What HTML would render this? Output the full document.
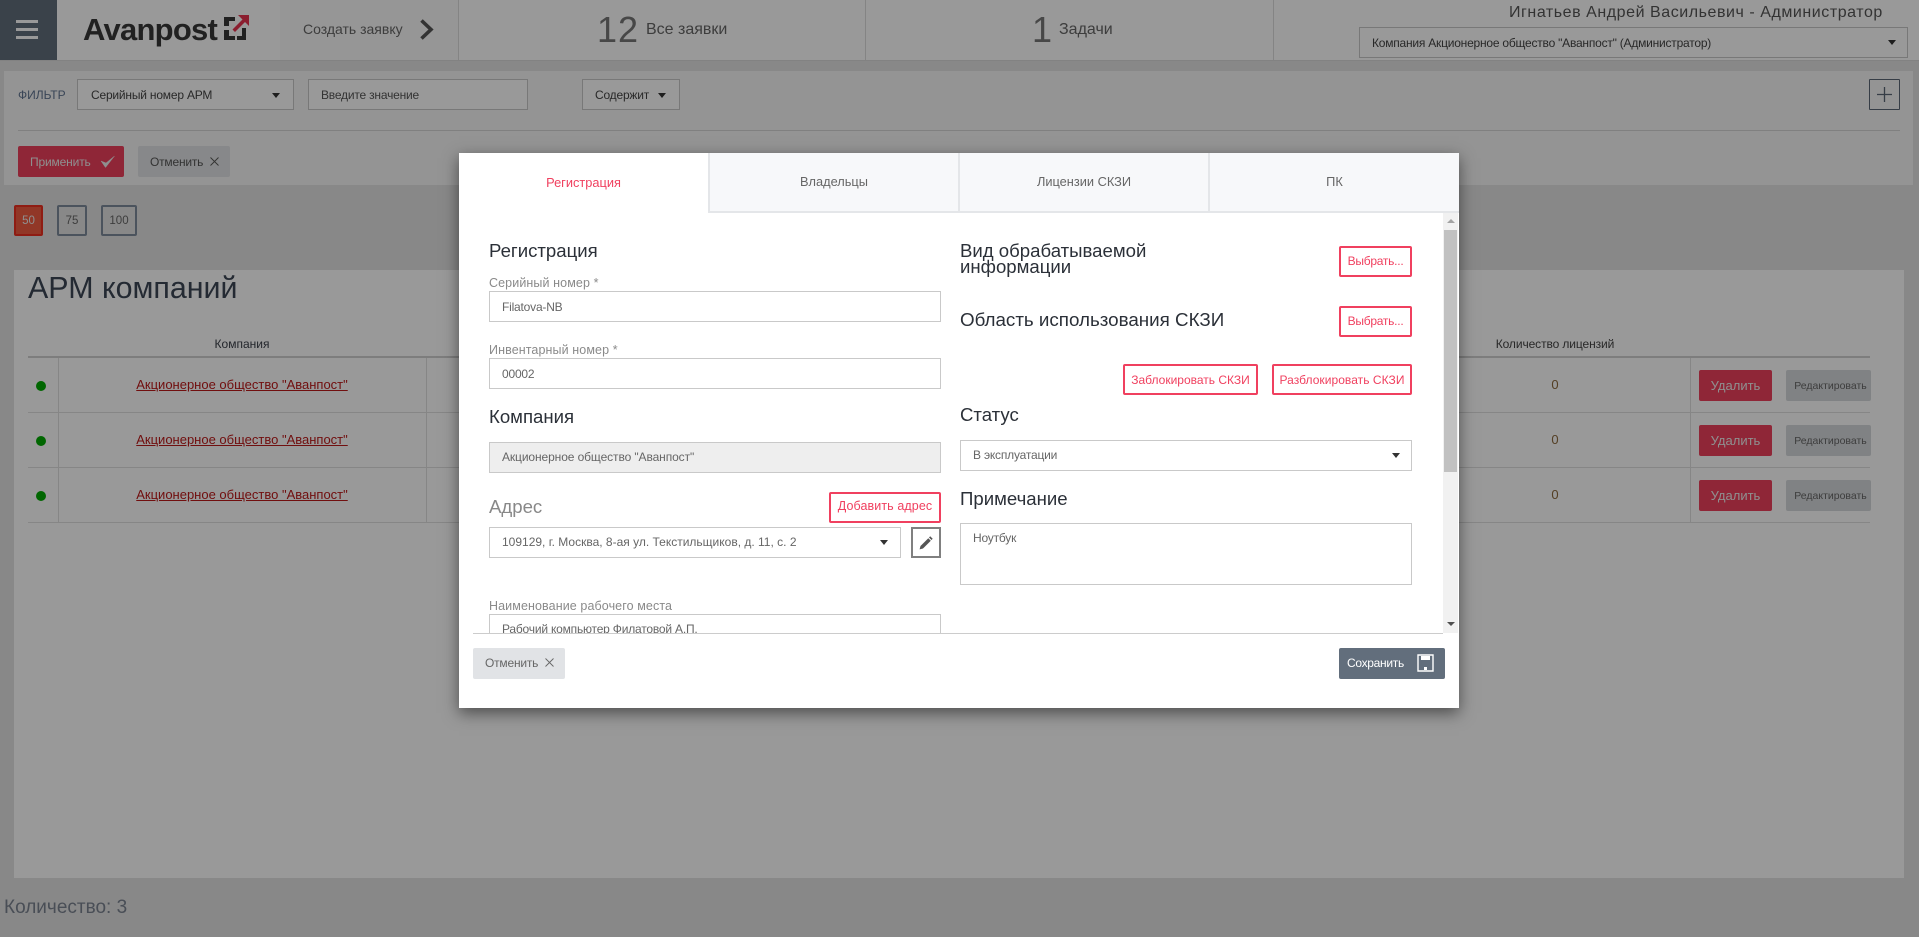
<!DOCTYPE html>
<html lang="ru"><head><meta charset="utf-8"><title>АРМ компаний</title>
<style>
*{box-sizing:border-box}
html,body{margin:0;padding:0;width:1919px;height:937px;overflow:hidden;background:#e3e3e3;font-family:"Liberation Sans","Noto Sans CJK SC",sans-serif;color:#555}
.a{position:absolute;white-space:nowrap}
.c{display:flex;align-items:center;justify-content:center}
.l{display:flex;align-items:center}
.fld{background:#fff;border:1px solid #c9c9c9;font-size:12px;letter-spacing:-.2px;color:#666;display:flex;align-items:center;padding-left:12px}
.tri{position:absolute;width:0;height:0;border-left:4.5px solid transparent;border-right:4.5px solid transparent;border-top:5px solid #333}
.h{font-size:18.6px;color:#2b3038;line-height:20px;height:20px}
.lab{font-size:12.5px;color:#8a8a8a;letter-spacing:.1px;line-height:16px;height:16px}
.rb{border:2px solid #f0405f;border-radius:2px;color:#f0405f;font-size:12px;letter-spacing:-.25px;background:#fff}
.del{background:#ee405c;border-radius:2px;color:#eee;font-size:13px}
.edt{background:#d6d9dd;border-radius:2px;color:#666;font-size:10.5px;padding-left:4px}
.tab{top:153px;height:60px;background:#f7f8fa;border-left:2px solid #e4e6e9;border-bottom:2px solid #e4e6e9;font-size:12.8px;color:#666;padding-bottom:2px}
.lnk{color:#bc1a1a;font-size:13px;text-decoration:underline}
.hl{height:1px;background:#e0e0e0}
</style></head><body>

<!-- header -->
<div class="a" style="left:0;top:0;width:1919px;height:61px;background:#fff;border-bottom:1px solid #d9d9d9"></div>
<div class="a" style="left:0;top:0;width:57px;height:60px;background:#626e7c"></div>
<div class="a" style="left:16px;top:20px;width:22px;height:3px;background:#fff"></div>
<div class="a" style="left:16px;top:28px;width:22px;height:3px;background:#fff"></div>
<div class="a" style="left:16px;top:36px;width:22px;height:3px;background:#fff"></div>
<div class="a l" style="left:83px;top:12px;height:36px;font-size:31px;font-weight:bold;letter-spacing:-.75px;color:#383838">Avanpost</div>
<svg class="a" style="left:224px;top:14px" width="26" height="27" viewBox="0 0 26 27">
<path d="M0 3H11V7H5V12H0zM0 16H5V22H11V26H0zM22 14V26H13V22H18V14z" fill="#383838"/>
<path d="M14 1H25V12zM21.500 2.500 24 5 11 18 8.500 15.500z" fill="#e8324f"/>
</svg>
<div class="a" style="left:280px;top:0;width:179px;height:60px;background:#fafafa"></div>
<div class="a" style="left:458px;top:0;width:1px;height:60px;background:#dcdcdc"></div>
<div class="a" style="left:865px;top:0;width:1px;height:60px;background:#dcdcdc"></div>
<div class="a" style="left:1273px;top:0;width:1px;height:60px;background:#dcdcdc"></div>
<div class="a l" style="left:303px;top:20px;height:18px;font-size:14px;color:#666">Создать заявку</div>
<svg class="a" style="left:418px;top:18px" width="17" height="23" viewBox="0 0 17 23"><path d="M3.500 2.500 13 11.500 3.500 20.500" fill="none" stroke="#555" stroke-width="3.600"/></svg>
<div class="a l" style="left:597px;top:10px;height:40px;font-size:36px;color:#777;letter-spacing:1px">12</div>
<div class="a l" style="left:646px;top:20px;height:20px;font-size:16px;color:#666">Все заявки</div>
<div class="a l" style="left:1032px;top:10px;height:40px;font-size:36px;color:#777">1</div>
<div class="a l" style="left:1059px;top:20px;height:20px;font-size:16px;color:#666">Задачи</div>
<div class="a l" style="left:1509px;top:3px;height:20px;font-size:16px;color:#555;letter-spacing:.55px">Игнатьев Андрей Васильевич - Администратор</div>
<div class="a fld" style="left:1359px;top:27px;width:549px;height:31px;color:#444;font-size:12px;letter-spacing:-.22px">Компания Акционерное общество "Аванпост" (Администратор)</div>
<div class="tri" style="left:1888px;top:40px"></div>

<!-- filter -->
<div class="a" style="left:4px;top:71px;width:1909px;height:114px;background:#f7f7f7"></div>
<div class="a l" style="left:18px;top:87px;height:16px;font-size:12px;color:#5f7390">ФИЛЬТР</div>
<div class="a fld" style="left:77px;top:79px;width:217px;height:31px;color:#444;padding-left:13px">Серийный номер АРМ</div>
<div class="tri" style="left:272px;top:93px"></div>
<div class="a fld" style="left:308px;top:79px;width:220px;height:31px;color:#555">Введите значение</div>
<div class="a fld" style="left:582px;top:79px;width:98px;height:31px;color:#444">Содержит</div>
<div class="tri" style="left:658px;top:93px"></div>
<div class="a c" style="left:1869px;top:79px;width:31px;height:31px;border:1px solid #5a6675;border-radius:1px"><svg width="15" height="15"><path d="M7.500 0v15M0 7.500h15" stroke="#5a6675" stroke-width="1.300"/></svg></div>
<div class="a" style="left:18px;top:130px;width:1882px;height:1px;background:#d5d5d5"></div>
<div class="a l" style="left:18px;top:146px;width:106px;height:31px;background:#ee405c;border-radius:2px;color:#eee;font-size:12px;letter-spacing:-.15px;padding-left:12px">Применить</div>
<svg class="a" style="left:100px;top:155px" width="15" height="14" viewBox="0 0 15 14"><path d="M1 6 5.500 12.500 14.500 1 6 8z" fill="#eee" stroke="#eee" stroke-width=".5"/></svg>
<div class="a l" style="left:138px;top:146px;width:92px;height:31px;background:#e1e3e6;border-radius:2px;color:#555;font-size:12px;letter-spacing:-.2px;padding-left:12px">Отменить</div>
<svg class="a" style="left:210px;top:157px" width="9" height="9"><path d="M.5.500l8 8M8.500.500l-8 8" stroke="#555" stroke-width=".9"/></svg>

<!-- pagination -->
<div class="a c" style="left:14px;top:205px;width:29px;height:31px;background:#f25c42;border:2px solid #ee3020;border-radius:2px;color:#eee;font-size:11.5px">50</div>
<div class="a c" style="left:57px;top:205px;width:30px;height:31px;border:2px solid #7e8a9b;border-radius:2px;color:#666;font-size:11.5px">75</div>
<div class="a c" style="left:101px;top:205px;width:36px;height:31px;border:2px solid #7e8a9b;border-radius:2px;color:#666;font-size:11.5px">100</div>

<!-- main -->
<div class="a" style="left:14px;top:270px;width:1890px;height:608px;background:#fff"></div>
<div class="a l" style="left:28px;top:270px;height:36px;font-size:30.4px;color:#3c4656">АРМ компаний</div>
<div class="a c" style="left:58px;top:336px;width:368px;height:16px;font-size:12px;color:#3a3f48">Компания</div>
<div class="a c" style="left:1420px;top:336px;width:270px;height:16px;font-size:12px;color:#444;letter-spacing:-.1px">Количество лицензий</div>
<div class="a" style="left:28px;top:356px;width:1842px;height:2px;background:#d0d0d0"></div>
<div class="a hl" style="left:28px;top:412px;width:1842px"></div>
<div class="a hl" style="left:28px;top:467px;width:1842px"></div>
<div class="a hl" style="left:28px;top:522px;width:1842px"></div>
<div class="a" style="left:58px;top:358px;width:1px;height:165px;background:#e0e0e0"></div>
<div class="a" style="left:426px;top:358px;width:1px;height:165px;background:#e0e0e0"></div>
<div class="a" style="left:1690px;top:358px;width:1px;height:165px;background:#e0e0e0"></div>

<div class="a" style="left:36px;top:381px;width:10px;height:10px;border-radius:50%;background:#00aa00"></div>
<div class="a" style="left:36px;top:436px;width:10px;height:10px;border-radius:50%;background:#00aa00"></div>
<div class="a" style="left:36px;top:491px;width:10px;height:10px;border-radius:50%;background:#00aa00"></div>
<div class="a c lnk" style="left:58px;top:375px;width:368px;height:18px">Акционерное общество "Аванпост"</div>
<div class="a c lnk" style="left:58px;top:430px;width:368px;height:18px">Акционерное общество "Аванпост"</div>
<div class="a c lnk" style="left:58px;top:485px;width:368px;height:18px">Акционерное общество "Аванпост"</div>
<div class="a c" style="left:1535px;top:376px;width:40px;height:16px;font-size:13px;color:#8c6a3c">0</div>
<div class="a c" style="left:1535px;top:431px;width:40px;height:16px;font-size:13px;color:#8c6a3c">0</div>
<div class="a c" style="left:1535px;top:486px;width:40px;height:16px;font-size:13px;color:#8c6a3c">0</div>
<div class="a c del" style="left:1699px;top:370px;width:73px;height:31px">Удалить</div>
<div class="a c del" style="left:1699px;top:425px;width:73px;height:31px">Удалить</div>
<div class="a c del" style="left:1699px;top:480px;width:73px;height:31px">Удалить</div>
<div class="a c edt" style="left:1786px;top:370px;width:85px;height:31px">Редактировать</div>
<div class="a c edt" style="left:1786px;top:425px;width:85px;height:31px">Редактировать</div>
<div class="a c edt" style="left:1786px;top:480px;width:85px;height:31px">Редактировать</div>
<div class="a l" style="left:4px;top:897px;height:22px;font-size:19px;color:#7a8290">Количество: 3</div>

<!-- overlay -->
<div class="a" style="left:0;top:0;width:1919px;height:937px;background:rgba(0,0,0,.4)"></div>

<!-- modal -->
<div class="a" style="left:459px;top:153px;width:1000px;height:555px;background:#fff;box-shadow:0 5px 15px rgba(0,0,0,.5)"></div>
<div class="a c" style="left:459px;top:153px;width:249px;height:60px;font-size:12.8px;color:#f0405f;padding-bottom:2px">Регистрация</div>
<div class="a c tab" style="left:708px;width:250px">Владельцы</div>
<div class="a c tab" style="left:958px;width:250px">Лицензии СКЗИ</div>
<div class="a c tab" style="left:1208px;width:251px">ПК</div>

<div class="a h" style="left:489px;top:241px">Регистрация</div>
<div class="a lab" style="left:489px;top:275px">Серийный номер *</div>
<div class="a fld" style="left:489px;top:291px;width:452px;height:31px">Filatova-NB</div>
<div class="a lab" style="left:489px;top:342px">Инвентарный номер *</div>
<div class="a fld" style="left:489px;top:358px;width:452px;height:31px">00002</div>
<div class="a h" style="left:489px;top:407px">Компания</div>
<div class="a fld" style="left:489px;top:442px;width:452px;height:31px;background:#eee;padding-bottom:2px;letter-spacing:-.1px">Акционерное общество "Аванпост"</div>
<div class="a h" style="left:489px;top:497px;color:#888">Адрес</div>
<div class="a c rb" style="left:829px;top:492px;width:112px;height:31px;letter-spacing:.1px;font-size:12.5px;padding-bottom:3px">Добавить адрес</div>
<div class="a fld" style="left:489px;top:527px;width:412px;height:31px;letter-spacing:0;padding-bottom:2px">109129, г. Москва, 8-ая ул. Текстильщиков, д. 11, с. 2</div>
<div class="tri" style="left:880px;top:540px"></div>
<div class="a c" style="left:911px;top:527px;width:30px;height:31px;border:2px solid #808080">
<svg width="14" height="14" viewBox="0 0 14 14"><path d="M9.300 2.200 11.800 4.700 4 12.500.6 13.400 1.500 10zM10 1.500 11.200.300 13.700 2.800 12.500 4z" fill="#555"/></svg></div>
<div class="a lab" style="left:489px;top:598px">Наименование рабочего места</div>
<div class="a" style="left:489px;top:614px;width:452px;height:19px;overflow:hidden"><div class="fld" style="width:452px;height:31px;padding-bottom:2px;letter-spacing:-.2px">Рабочий компьютер Филатовой А.П.</div></div>

<div class="a h" style="left:960px;top:243px;line-height:16px;height:34px;white-space:pre">Вид обрабатываемой
информации</div>
<div class="a h" style="left:960px;top:310px;font-size:18.8px">Область использования СКЗИ</div>
<div class="a c rb" style="left:1339px;top:246px;width:73px;height:31px;padding-bottom:1px">Выбрать...</div>
<div class="a c rb" style="left:1339px;top:306px;width:73px;height:31px;padding-bottom:1px">Выбрать...</div>
<div class="a c rb" style="left:1123px;top:364px;width:135px;height:31px;letter-spacing:0">Заблокировать СКЗИ</div>
<div class="a c rb" style="left:1272px;top:364px;width:140px;height:31px;letter-spacing:.05px">Разблокировать СКЗИ</div>
<div class="a h" style="left:960px;top:405px">Статус</div>
<div class="a fld" style="left:960px;top:440px;width:452px;height:31px;padding-bottom:2px">В эксплуатации</div>
<div class="tri" style="left:1392px;top:453px"></div>
<div class="a h" style="left:960px;top:489px">Примечание</div>
<div class="a fld" style="left:960px;top:523px;width:452px;height:62px;align-items:flex-start;padding-top:7px">Ноутбук</div>

<!-- scrollbar -->
<div class="a" style="left:1443px;top:213px;width:15px;height:420px;background:#f1f1f1"></div>
<div class="a" style="left:1444px;top:230px;width:13px;height:242px;background:#c1c1c1"></div>
<div class="a" style="left:1447px;top:219px;width:0;height:0;border-left:4px solid transparent;border-right:4px solid transparent;border-bottom:4px solid #a3a3a3"></div>
<div class="a" style="left:1447px;top:622px;width:0;height:0;border-left:4px solid transparent;border-right:4px solid transparent;border-top:4px solid #505050"></div>

<div class="a" style="left:473px;top:633px;width:970px;height:1px;background:#ccc"></div>
<div class="a l" style="left:473px;top:648px;width:92px;height:31px;background:#e1e3e6;border-radius:2px;color:#666;font-size:12px;letter-spacing:-.2px;padding:0 0 2px 12px">Отменить</div>
<svg class="a" style="left:545px;top:658px" width="9" height="9"><path d="M.5.500l8 8M8.500.500l-8 8" stroke="#666" stroke-width=".9"/></svg>
<div class="a l" style="left:1339px;top:648px;width:106px;height:31px;background:#626e7c;border-radius:2px;color:#fff;font-size:12px;letter-spacing:-.3px;padding:0 0 2px 8px">Сохранить</div>
<svg class="a" style="left:1417px;top:654px" width="17" height="18" viewBox="0 0 17 18"><path d="M1 1h15v16H1z" fill="none" stroke="#fff" stroke-width="1.400"/><path d="M4 2h9v4H4zM7 13h3v3H7z" fill="#fff"/></svg>
</body></html>
